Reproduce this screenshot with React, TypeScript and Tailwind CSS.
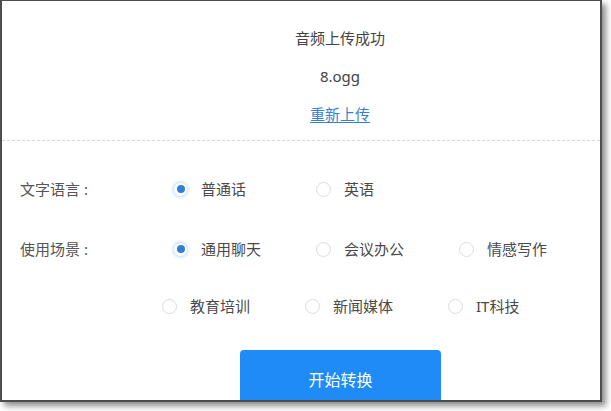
import React from "react";

const font = { fontFamily: '"Noto Sans", "Noto Sans CJK SC", sans-serif' };

function Radio({ label, checked }: { label: string; checked?: boolean }) {
  return (
    <div className="flex w-[143px] shrink-0 items-center">
      {checked ? (
        <span className="flex h-[15px] w-[15px] items-center justify-center rounded-full border border-[#cfe3f8] bg-white shadow-[0_0_0_2px_#eef5fd]">
          <span className="h-[8px] w-[8px] rounded-full bg-[#2f7fd8]" />
        </span>
      ) : (
        <span className="h-[15px] w-[15px] rounded-full border border-[#dcdcdc] bg-white" />
      )}
      <span className="ml-[13px] text-[15px] text-[#4a4a4a]">{label}</span>
    </div>
  );
}

export default function App() {
  return (
    <div className="h-[411px] w-[611px] bg-white" style={font}>
      <div className="relative h-[402px] w-[602px] overflow-hidden border-t border-r-2 border-b-2 border-l-2 border-[#4d4d4d] bg-white shadow-[4px_4px_6px_rgba(0,0,0,0.45)]">
        <div className="ml-[136px] w-[404px] pt-[18px] text-center text-[15px] leading-[38px] text-[#444]">
          <div>音频上传成功</div>
          <div>8.ogg</div>
          <div>
            <span className="text-[#3b7fd2] underline underline-offset-2">重新上传</span>
          </div>
        </div>
        <div className="mt-[7px] border-t border-dashed border-[#d8d8d8]" />
        <div className="px-[18px] pt-[33px]">
          <div className="flex h-[30px] items-center">
            <div className="w-[153px] shrink-0 text-[15px] text-[#555]">文字语言 :</div>
            <Radio label="普通话" checked />
            <Radio label="英语" />
          </div>
          <div className="mt-[30px] flex h-[30px] items-center">
            <div className="w-[153px] shrink-0 text-[15px] text-[#555]">使用场景 :</div>
            <Radio label="通用聊天" checked />
            <Radio label="会议办公" />
            <Radio label="情感写作" />
          </div>
          <div className="mt-[27px] flex h-[30px] items-center">
            <div className="w-[142px] shrink-0" />
            <Radio label="教育培训" />
            <Radio label="新闻媒体" />
            <Radio label="IT科技" />
          </div>
        </div>
        <div className="ml-[238px] mt-[29px] flex h-[60px] w-[201px] items-center justify-center rounded-[4px] bg-[#1e8bf7] text-[16px] text-white">
          开始转换
        </div>
      </div>
    </div>
  );
}
